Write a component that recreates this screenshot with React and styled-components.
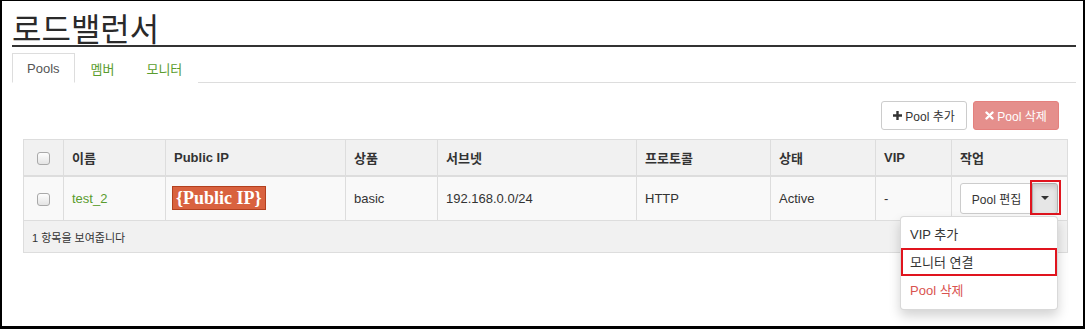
import React from "react";
import styled, { createGlobalStyle } from "styled-components";

const Global = createGlobalStyle`
  html, body { margin: 0; padding: 0; background: #fff; }
  body {
    font-family: "Liberation Sans", Arial, "Noto Sans CJK KR", sans-serif;
    color: #333;
    font-size: 13px;
  }
  * { box-sizing: border-box; }
`;

const Frame = styled.div`
  width: 1085px;
  height: 329px;
  border-style: solid;
  border-color: #000;
  border-width: 1px 2px 3px 2px;
  padding: 0 7px 0 10px;
  overflow: hidden;
  background: #fff;
`;

const Title = styled.h1`
  margin: 0;
  padding-top: 8px;
  font-family: "Noto Sans CJK KR", sans-serif;
  font-weight: 400;
  font-size: 32px;
  line-height: 36px;
  height: 46px;
  color: #2a2a2a;
  border-bottom: 2px solid #333;
`;

const TabNav = styled.ul`
  list-style: none;
  margin: 6px 0 0;
  padding: 0;
  display: flex;
  height: 30px;
  border-bottom: 1px solid #ddd;
`;

const Tab = styled.li`
  height: 30px;
  padding: 0 ${(p) => (p.$active ? 14 : 15)}px;
  display: flex;
  align-items: center;
  border: 1px solid ${(p) => (p.$active ? "#ddd" : "transparent")};
  border-bottom-color: ${(p) => (p.$active ? "#fff" : "transparent")};
  background: #fff;
  color: ${(p) => (p.$active ? "#555" : "#5a9c2e")};
  font-size: 13px;
  margin-bottom: -1px;
`;

const Panel = styled.div`
  padding: 18px 9px 0 11px;
`;

const Toolbar = styled.div`
  display: flex;
  justify-content: flex-end;
  gap: 6px;
  padding-right: 8px;
  margin-bottom: 9px;
`;

const Button = styled.button`
  font-family: inherit;
  display: inline-flex;
  align-items: center;
  justify-content: center;
  gap: 3px;
  height: ${(p) => p.$h || 29}px;
  width: ${(p) => p.$w}px;
  padding: 0;
  font-size: 12px;
  border-radius: 3px;
  border: 1px solid ${(p) => (p.$danger ? "#e4807d" : "#ccc")};
  background: ${(p) => (p.$danger ? "#e58f8c" : "#fff")};
  color: ${(p) => (p.$danger ? "#fff" : "#333")};
  cursor: pointer;
`;

const Table = styled.table`
  width: 1044px;
  table-layout: fixed;
  border-collapse: collapse;
  border: 1px solid #ddd;
`;

const Col = styled.col`
  width: ${(p) => p.$w}px;
`;

const Th = styled.th`
  height: 36px;
  padding: 0 8px;
  text-align: ${(p) => (p.$center ? "center" : "left")};
  font-weight: 700;
  font-size: 13px;
  background: #f1f1f1;
  border: 1px solid #ddd;
  border-bottom: 2px solid #ddd;
  vertical-align: middle;
`;

const Td = styled.td`
  height: 45px;
  padding: 0 8px;
  text-align: ${(p) => (p.$center ? "center" : "left")};
  background: #f9f9f9;
  border: 1px solid #ddd;
  vertical-align: middle;
  font-size: 13px;
`;

const FootTd = styled.td`
  height: 32px;
  padding: 0 8px;
  background: #f1f1f1;
  border: 1px solid #ddd;
  font-size: 11px;
  vertical-align: middle;
`;

const Check = styled.span`
  display: inline-block;
  width: 13px;
  height: 13px;
  border: 1px solid #a9a9a9;
  border-radius: 3px;
  background: linear-gradient(#fdfdfd, #e4e4e4);
  vertical-align: middle;
`;

const Link = styled.a`
  color: #5a9c2e;
  text-decoration: none;
`;

const Badge = styled.span`
  display: inline-block;
  height: 24px;
  line-height: 22px;
  padding: 0 3px;
  margin-left: -2px;
  background: #d9623f;
  border: 1px solid #b3401f;
  color: #fff;
  font-family: "Liberation Serif", "DejaVu Serif", serif;
  font-weight: 700;
  font-size: 18px;
`;

const BtnGroup = styled.div`
  position: relative;
  display: inline-flex;
`;

const CaretBtn = styled.button`
  position: relative;
  width: 26px;
  height: 31px;
  padding: 0;
  border: 1px solid #adadad;
  border-radius: 0 3px 3px 0;
  margin-left: -1px;
  background: #e6e6e6;
  box-shadow: inset 0 3px 5px rgba(0, 0, 0, 0.125);
  display: flex;
  align-items: center;
  justify-content: center;
  &::after {
    content: "";
    position: absolute;
    top: -4px;
    left: -3px;
    right: -4px;
    bottom: -2px;
    border: 2px solid #e0141e;
  }
`;

const Caret = styled.span`
  width: 0;
  height: 0;
  border-top: 4px solid #333;
  border-left: 4px solid transparent;
  border-right: 4px solid transparent;
`;

const EditBtn = styled.button`
  font-family: inherit;
  height: 31px;
  width: 73px;
  padding: 0;
  font-size: 12px;
  border: 1px solid #ccc;
  border-radius: 3px 0 0 3px;
  background: #fff;
  color: #333;
`;

const Menu = styled.ul`
  position: absolute;
  top: 33px;
  right: 0;
  width: 158px;
  margin: 0;
  padding: 3px 0 5px;
  list-style: none;
  background: #fff;
  border: 1px solid rgba(0, 0, 0, 0.15);
  border-radius: 4px;
  box-shadow: 0 6px 12px rgba(0, 0, 0, 0.175);
  z-index: 10;
`;

const MenuItem = styled.li`
  height: 28px;
  display: flex;
  align-items: center;
  padding: 0 9px;
  font-size: 13px;
  color: ${(p) => (p.$danger ? "#d9534f" : "#333")};
  outline: ${(p) => (p.$marked ? "2px solid #e0141e" : "none")};
  outline-offset: -2px;
`;

const PlusIcon = () => (
  <svg width="9" height="9" viewBox="0 0 9 9">
    <path d="M3.3 0h2.4v3.3H9v2.4H5.7V9H3.3V5.7H0V3.3h3.3z" fill="#333" />
  </svg>
);

const XIcon = () => (
  <svg width="9" height="9" viewBox="0 0 9 9">
    <path d="M1.5 1.5l6 6M7.5 1.5l-6 6" stroke="#fff" strokeWidth="2.4" strokeLinecap="round" />
  </svg>
);

const cols = [40, 102, 180, 92, 199, 134, 105, 76, 116];

export default function App() {
  return (
    <>
      <Global />
      <Frame>
        <Title>로드밸런서</Title>
        <TabNav>
          <Tab $active>Pools</Tab>
          <Tab>멤버</Tab>
          <Tab>모니터</Tab>
        </TabNav>
        <Panel>
          <Toolbar>
            <Button $w={86}>
              <PlusIcon /> Pool 추가
            </Button>
            <Button $w={86} $danger>
              <XIcon /> Pool 삭제
            </Button>
          </Toolbar>
          <Table>
            <colgroup>
              {cols.map((w, i) => (
                <Col key={i} $w={w} />
              ))}
            </colgroup>
            <thead>
              <tr>
                <Th $center>
                  <Check />
                </Th>
                <Th>이름</Th>
                <Th>Public IP</Th>
                <Th>상품</Th>
                <Th>서브넷</Th>
                <Th>프로토콜</Th>
                <Th>상태</Th>
                <Th>VIP</Th>
                <Th>작업</Th>
              </tr>
            </thead>
            <tbody>
              <tr>
                <Td $center>
                  <Check />
                </Td>
                <Td>
                  <Link href="#">test_2</Link>
                </Td>
                <Td>
                  <Badge>{"{Public IP}"}</Badge>
                </Td>
                <Td>basic</Td>
                <Td>192.168.0.0/24</Td>
                <Td>HTTP</Td>
                <Td>Active</Td>
                <Td>-</Td>
                <Td>
                  <BtnGroup>
                    <EditBtn>Pool 편집</EditBtn>
                    <CaretBtn>
                      <Caret />
                    </CaretBtn>
                    <Menu>
                      <MenuItem>VIP 추가</MenuItem>
                      <MenuItem $marked>모니터 연결</MenuItem>
                      <MenuItem $danger>Pool 삭제</MenuItem>
                    </Menu>
                  </BtnGroup>
                </Td>
              </tr>
            </tbody>
            <tfoot>
              <tr>
                <FootTd colSpan={9}>1 항목을 보여줍니다</FootTd>
              </tr>
            </tfoot>
          </Table>
        </Panel>
      </Frame>
    </>
  );
}
